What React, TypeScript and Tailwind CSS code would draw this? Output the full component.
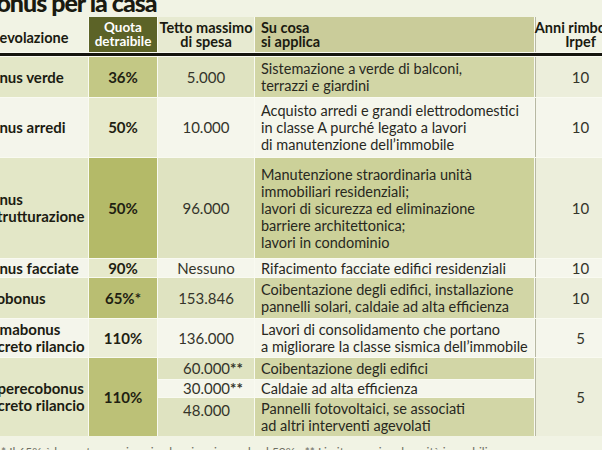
import React from "react";

const F = { fontFamily: "Lato, 'Open Sans', sans-serif" };

function L({ lines }: { lines: string[] }) {
  return (
    <>
      {lines.map((l, i) => (
        <div key={i} className="whitespace-nowrap">
          {l}
        </div>
      ))}
    </>
  );
}

export default function App() {
  const c1 = "flex flex-col justify-center text-[15px] font-bold leading-[17px] text-[#1c1c12] whitespace-nowrap";
  const c2 = "flex items-center justify-center text-[15px] font-bold text-[#1f1f12]";
  const c3 = "flex items-center justify-center text-[15px] text-[#34342a]";
  const c3l = "flex items-center pl-[25px] text-[15px] text-[#34342a] whitespace-nowrap";
  const c4 = "flex flex-col justify-center pl-[6px] text-[14.5px] leading-[17px] text-[#28281e]";
  const c5 = "flex items-center justify-center border-l border-[#b7b8a2] text-[15px] text-[#34342a]";
  const h = "text-[14.5px] font-bold leading-[13.5px]";
  return (
    <div className="w-[602px] h-[450px] overflow-hidden bg-[#f1f3e4]" style={F}>
      <div className="ml-[-19px] w-[645px]">
        <div className="flex h-[17px] items-start">
          <div className="mt-[-10px] text-[25px] font-black leading-[25px] tracking-[-1px] text-[#1a1a10] whitespace-nowrap">
            Bonus per la casa
          </div>
        </div>
        <div className="grid grid-cols-[107px_68px_96px_279px_90px] grid-rows-[35px_3px_40px_59px_100px_18px_40px_38px_21px_17px_38px] gap-x-px gap-y-px bg-[#f9faf1]">
          {/* header */}
          <div className={`flex items-end pb-[8px] pl-[1px] bg-[#f1f3e4] ${h} text-[#1a1a10]`}>
            Agevolazione
          </div>
          <div className="flex flex-col items-center justify-center bg-[#5c6327] text-[13.5px] font-bold leading-[13.5px] text-white">
            <div>Quota</div>
            <div>detraibile</div>
          </div>
          <div className={`flex flex-col items-center justify-center bg-[#e7ead1] ${h} text-[#1a1a10]`}>
            <div className="whitespace-nowrap">Tetto massimo</div>
            <div>di spesa</div>
          </div>
          <div className={`flex flex-col justify-center pl-[6px] bg-[#cacc9a] ${h} text-[#1a1a10]`}>
            <div>Su cosa</div>
            <div>si applica</div>
          </div>
          <div className={`flex flex-col items-center justify-center border-l border-[#b7b8a2] bg-[#f1f3e4] ${h} text-[#1a1a10]`}>
            <div className="whitespace-nowrap">Anni rimborso</div>
            <div>Irpef</div>
          </div>
          <div className="col-span-5 bg-[#15150e]" />

          {/* Bonus verde */}
          <div className={`${c1} bg-[#e3e7c7]`}>Bonus verde</div>
          <div className={`${c2} bg-[#c3c885]`}>36%</div>
          <div className={`${c3} bg-[#dfe3c1]`}>5.000</div>
          <div className={`${c4} bg-[#d2d6a6]`}>
            <L lines={["Sistemazione a verde di balconi,", "terrazzi e giardini"]} />
          </div>
          <div className={`${c5} bg-[#eceedb]`}>10</div>

          {/* Bonus arredi */}
          <div className={`${c1} bg-[#f4f5eb]`}>Bonus arredi</div>
          <div className={`${c2} bg-[#e6e9cb]`}>50%</div>
          <div className={`${c3} bg-[#f5f6ec]`}>10.000</div>
          <div className={`${c4} bg-[#f5f6ec]`}>
            <L
              lines={[
                "Acquisto arredi e grandi elettrodomestici",
                "in classe A purché legato a lavori",
                "di manutenzione dell’immobile",
              ]}
            />
          </div>
          <div className={`${c5} bg-[#f5f6ec]`}>10</div>

          {/* Ristrutturazione */}
          <div className={`${c1} bg-[#e3e7c7]`}>
            <div>Bonus</div>
            <div>ristrutturazione</div>
          </div>
          <div className={`${c2} bg-[#b4ba68]`}>50%</div>
          <div className={`${c3} bg-[#dfe3c1]`}>96.000</div>
          <div className={`${c4} bg-[#ccd199]`}>
            <L
              lines={[
                "Manutenzione straordinaria unità",
                "immobiliari residenziali;",
                "lavori di sicurezza ed eliminazione",
                "barriere architettonica;",
                "lavori in condominio",
              ]}
            />
          </div>
          <div className={`${c5} bg-[#eceedb]`}>10</div>

          {/* Facciate */}
          <div className={`${c1} bg-[#f4f5eb]`}>Bonus facciate</div>
          <div className={`${c2} bg-[#e6e9cb]`}>90%</div>
          <div className={`${c3} bg-[#f5f6ec]`}>Nessuno</div>
          <div className={`${c4} bg-[#f5f6ec]`}>
            <L lines={["Rifacimento facciate edifici residenziali"]} />
          </div>
          <div className={`${c5} bg-[#f5f6ec]`}>10</div>

          {/* Ecobonus */}
          <div className={`${c1} bg-[#e3e7c7]`}>Ecobonus</div>
          <div className={`${c2} bg-[#b9be72]`}>65%*</div>
          <div className={`${c3} bg-[#dfe3c1]`}>153.846</div>
          <div className={`${c4} bg-[#d2d6a6]`}>
            <L
              lines={[
                "Coibentazione degli edifici, installazione",
                "pannelli solari, caldaie ad alta efficienza",
              ]}
            />
          </div>
          <div className={`${c5} bg-[#eceedb]`}>10</div>

          {/* Sismabonus */}
          <div className={`${c1} bg-[#f4f5eb]`}>
            <div>Sismabonus</div>
            <div>decreto rilancio</div>
          </div>
          <div className={`${c2} bg-[#eceed8]`}>110%</div>
          <div className={`${c3} bg-[#f5f6ec]`}>136.000</div>
          <div className={`${c4} bg-[#f5f6ec]`}>
            <L
              lines={[
                "Lavori di consolidamento che portano",
                "a migliorare la classe sismica dell’immobile",
              ]}
            />
          </div>
          <div className={`${c5} bg-[#f5f6ec]`}>5</div>

          {/* Superecobonus */}
          <div className={`${c1} row-span-3 bg-[#e3e7c7]`}>
            <div>Superecobonus</div>
            <div>decreto rilancio</div>
          </div>
          <div className={`${c2} row-span-3 bg-[#bcc177]`}>110%</div>
          <div className={`${c3l} bg-[#dfe3c1]`}>
            60.000<span className="font-bold">**</span>
          </div>
          <div className={`${c4} bg-[#d2d6a6]`}>
            <L lines={["Coibentazione degli edifici"]} />
          </div>
          <div className={`${c5} row-span-3 bg-[#eceedb]`}>5</div>
          <div className={`${c3l} bg-[#f5f6ec]`}>
            30.000<span className="font-bold">**</span>
          </div>
          <div className={`${c4} bg-[#f5f6ec]`}>
            <L lines={["Caldaie ad alta efficienza"]} />
          </div>
          <div className={`${c3l} items-start pt-[1px] bg-[#dfe3c1]`}>48.000</div>
          <div className={`${c4} bg-[#d2d6a6]`}>
            <L lines={["Pannelli fotovoltaici, se associati", "ad altri interventi agevolati"]} />
          </div>
        </div>
        <div className="pt-[9px] pl-[20px] text-[12px] leading-[14px] text-[#6e6e62] whitespace-nowrap">
          * Il 65% è la quota massima: in alcuni casi scende al 50%&nbsp;&nbsp;&nbsp;** Limite per singola unità immobiliare
        </div>
      </div>
    </div>
  );
}
